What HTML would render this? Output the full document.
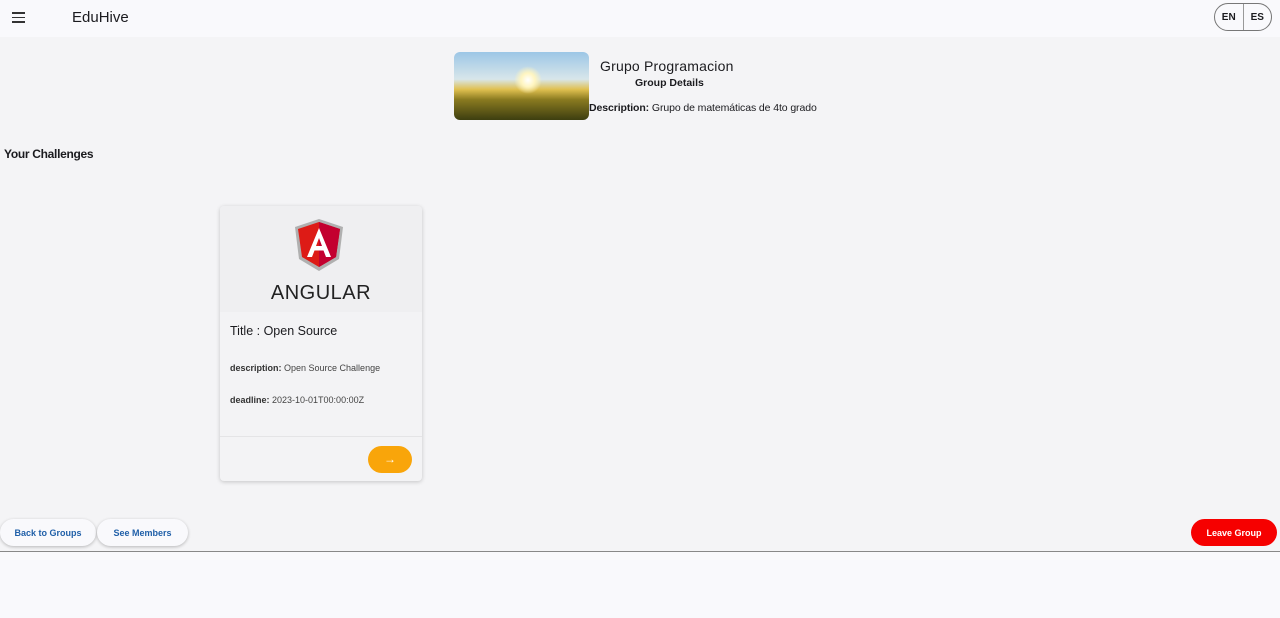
<!DOCTYPE html>
<html><head><meta charset="utf-8"><style>
*{box-sizing:border-box;margin:0;padding:0}
body{width:1280px;height:618px;overflow:hidden;background:#f4f4f6;font-family:"Liberation Sans",Roboto,sans-serif;position:relative;color:#1b1b1f}
.top{position:absolute;left:0;top:0;width:1280px;height:37px;background:#f9f9fc}
.ham{position:absolute;left:12px;top:12px;width:13px}
.ham i{display:block;height:1.6px;background:#333;margin-bottom:3px}
.logo{position:absolute;left:72px;top:9px;font-size:15px}
.lang{position:absolute;left:1214px;top:3px;width:58px;height:28px;border:1px solid #777;border-radius:14px;display:flex;font-size:10px;font-weight:bold}
.lang span{flex:1;display:flex;align-items:center;justify-content:center}
.lang span:first-child{border-right:1px solid #999}
.img{position:absolute;left:454px;top:52px;width:135px;height:68px;border-radius:6px;background:linear-gradient(180deg,#9cc6e6 0%,#d8e6ea 40%,#e0c050 55%,#8a7a20 70%,#3d3e10 100%);overflow:hidden}
.sun{position:absolute;left:60px;top:14px;width:28px;height:28px;border-radius:50%;background:radial-gradient(#fff 0%,#fff5c0 35%,rgba(255,240,180,0) 70%)}
.t1{position:absolute;left:600px;top:58px;font-size:14px;letter-spacing:.2px}
.t2{position:absolute;left:635px;top:77px;font-size:10.5px;font-weight:bold}
.t3{position:absolute;left:589px;top:102px;font-size:10.5px;letter-spacing:-.1px}
.yc{position:absolute;left:4px;top:147px;font-size:12px;font-weight:bold;letter-spacing:-.3px}
.card{position:absolute;left:220px;top:206px;width:202px;height:275px;background:#f3f3f5;border-radius:4px;box-shadow:0 1px 4px rgba(0,0,0,.2)}
.hd{height:106px;background:#efeff1;border-radius:4px 4px 0 0;position:relative}
.ang{position:absolute;left:0;width:202px;top:76px;text-align:center;font-size:20px;letter-spacing:.5px;color:#222}
.ct{position:absolute;left:10px;top:118px;font-size:12.5px}
.d{position:absolute;left:10px;font-size:9px;color:#444}
.d b{color:#333}
.sep{position:absolute;left:0;top:230px;width:202px;border-top:1px solid #e4e4e6}
.go{position:absolute;left:148px;top:240px;width:44px;height:27px;border-radius:14px;background:#f9a50a;color:#fff;font-size:12px;text-align:center;line-height:26px}
.btn{position:absolute;top:519px;height:27px;border-radius:14px;background:#f9f9fc;box-shadow:0 1px 3px rgba(0,0,0,.25);color:#1f5fa8;font-size:9px;font-weight:bold;display:flex;align-items:center;justify-content:center}
.leave{position:absolute;left:1191px;top:519px;width:86px;height:27px;border-radius:14px;background:#f60000;color:#fff;font-size:9px;font-weight:bold;display:flex;align-items:center;justify-content:center}
.foot{position:absolute;left:0;top:551px;width:1280px;height:67px;background:#f9f9fc;border-top:1px solid #888}
</style></head><body>
<div class="top"><div class="ham"><i></i><i></i><i></i></div><div class="logo">EduHive</div>
<div class="lang"><span>EN</span><span>ES</span></div></div>
<div class="img"><div class="sun"></div></div>
<div class="t1">Grupo Programacion</div>
<div class="t2">Group Details</div>
<div class="t3"><b>Description:</b> Grupo de matemáticas de 4to grado</div>
<div class="yc">Your Challenges</div>
<div class="card">
<div class="hd">
<svg style="position:absolute;left:75px;top:13px" width="48" height="52" viewBox="0 0 48 52"><polygon points="24,0 48,8 44,40 24,52 4,40 0,8" fill="#b0b0b0"/><polygon points="24,3 45,10 41,38 24,48 7,38 3,10" fill="#dd1b16"/><polygon points="24,3 45,10 41,38 24,48" fill="#c3002f"/><path d="M24 9 L12 38 H17 L19.5 31.5 H28.5 L31 38 H36 Z M21 27 L24 19 L27 27 Z" fill="#fff"/></svg>
<div class="ang">ANGULAR</div></div>
<div class="ct">Title : Open Source</div>
<div class="d" style="top:157px"><b>description:</b> Open Source Challenge</div>
<div class="d" style="top:189px"><b>deadline:</b> 2023-10-01T00:00:00Z</div>
<div class="sep"></div>
<div class="go">→</div>
</div>
<div class="btn" style="left:0;width:96px">Back to Groups</div>
<div class="btn" style="left:97px;width:91px">See Members</div>
<div class="leave">Leave Group</div>
<div class="foot"></div>
</body></html>
